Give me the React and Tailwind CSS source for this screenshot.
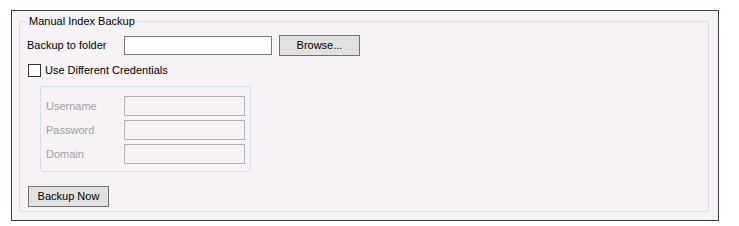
export default function App() {
  return (
    <div className="min-h-screen bg-white pl-[11px] pt-[10px] font-['Liberation_Sans',Arial,sans-serif] text-[11px] leading-[13px] text-black">
      {/* Outer frame */}
      <div className="flex h-[211px] w-[708px] flex-col border border-[#404040] bg-[#f6f2f6] pl-[7px] pt-[3px]">
        <fieldset className="flex h-[198px] w-[690px] flex-col rounded-[3px] border border-[#d5dfe5] pl-[7px]">
          <legend className="-ml-px px-[3px] leading-[14px]">Manual Index Backup</legend>

          {/* Folder row */}
          <div className="mt-[7px] flex h-[21px] items-center">
            <span className="w-[97px]">Backup to folder</span>
            <input
              type="text"
              className="h-[19px] w-[148px] border border-[#7a7a7a] bg-white outline-none"
            />
            <button className="ml-[7px] h-[21px] w-[81px] border border-[#707070] bg-[#e1e1e1] text-center">
              Browse...
            </button>
          </div>

          {/* Credentials checkbox */}
          <label className="mt-[8px] flex h-[13px] items-center gap-[4px]">
            <span className="ml-[1px] h-[13px] w-[13px] border border-[#333333] bg-white" />
            <span>Use Different Credentials</span>
          </label>

          {/* Disabled credentials box */}
          <div className="ml-[13px] mt-[9px] flex h-[86px] w-[211px] flex-col gap-[4px] rounded-[3px] border border-[#d5dfe5] pl-[5px] pt-[9px] text-[#a0a0a0]">
            {['Username', 'Password', 'Domain'].map((label) => (
              <div key={label} className="flex h-[20px] items-center">
                <span className="w-[78px]">{label}</span>
                <div className="h-[20px] w-[121px] border border-[#b4b4b4]" />
              </div>
            ))}
          </div>

          <button className="ml-[1px] mt-[14px] h-[21px] w-[81px] border border-[#707070] bg-[#e1e1e1] text-center">
            Backup Now
          </button>
        </fieldset>
      </div>
    </div>
  );
}
